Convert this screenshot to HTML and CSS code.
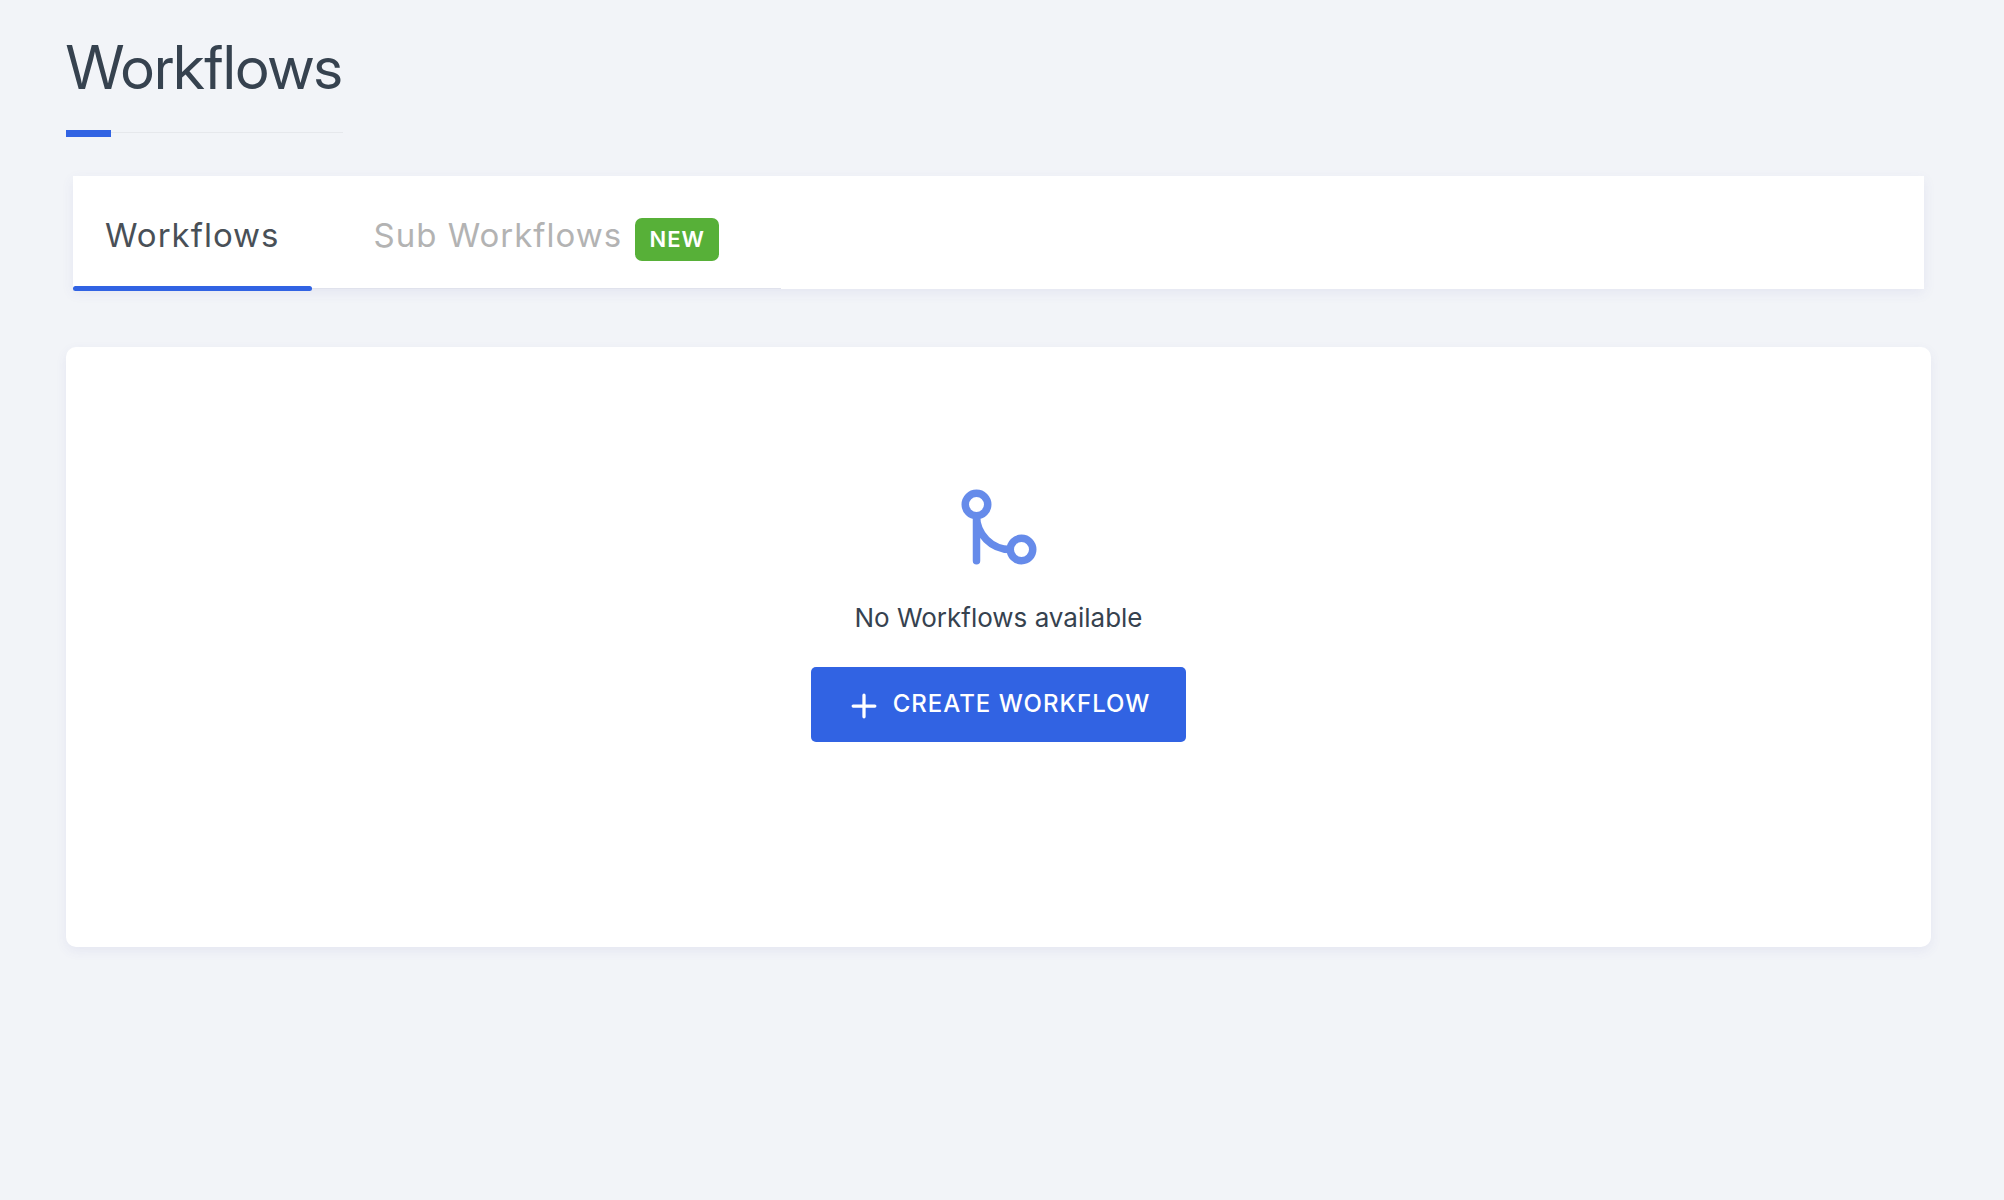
FILE: index.html
```html
<!DOCTYPE html>
<html lang="en">
<head>
<meta charset="utf-8">
<meta name="viewport" content="width=device-width, initial-scale=1">
<title>Workflows</title>
<link rel="stylesheet" href="styles.css">
</head>
<body>
<main class="page">
  <header class="page-header">
    <h1 class="page-title">Workflows</h1>
  </header>
  <nav class="tabs" aria-label="Workflow types">
    <a class="tab tab-active" href="#workflows" aria-current="page">Workflows</a>
    <a class="tab" href="#sub-workflows">Sub Workflows <span class="badge">NEW</span></a>
  </nav>
  <section class="card">
    <svg class="card-icon" viewBox="0 0 24 24" aria-hidden="true">
      <circle cx="18" cy="18" r="3"/>
      <circle cx="6" cy="6" r="3"/>
      <path d="M6 21V9a9 9 0 0 0 9 9"/>
    </svg>
    <p class="card-message">No Workflows available</p>
    <button class="create-button" type="button">
      <svg class="plus-icon" viewBox="0 0 24 24" aria-hidden="true"><path d="M12 2v20M2 12h20"/></svg>
      CREATE WORKFLOW
    </button>
  </section>
</main>
</body>
</html>
```
FILE: styles.css
```css
* {
  box-sizing: border-box;
}

body {
  margin: 0;
  background: #f2f4f8;
  color: #36424f;
  font-family: Inter, "Liberation Sans", sans-serif;
}

.page {
  padding: 31px 73px 32px 66px;
}

.page-header {
  width: fit-content;
  padding-bottom: 28px;
  border-bottom: 1px solid #e6e8ec;
}

.page-header::after {
  content: "";
  position: absolute;
  width: 45px;
  height: 7px;
  margin-top: 26px;
  background: #3163e3;
}

.page-title {
  margin: 0;
  font-family: "Inter Display", Inter, "Liberation Sans", sans-serif;
  font-size: 61px;
  line-height: 73px;
  font-weight: 400;
}

.tabs {
  display: flex;
  align-items: flex-start;
  height: 113px;
  margin: 43px 7px 58px;
  background: #fff;
  box-shadow: 0 4px 12px rgba(80, 80, 160, 0.08);
}

.tab {
  height: 113px;
  padding: 39px 62px 0;
  border-bottom: 1px solid #e0e2ec;
  color: #b3b3b3;
  font-size: 33px;
  line-height: 40px;
  letter-spacing: 1px;
  text-decoration: none;
  white-space: nowrap;
}

.tab-active {
  height: 115px;
  padding: 39px 32px 0;
  border-bottom: 0;
  color: #495057;
}

.tab-active::after {
  content: "";
  display: block;
  height: 5px;
  margin: 31px -32px 0;
  border-radius: 3px;
  background: #3163e3;
}

.badge {
  display: inline-block;
  margin-left: 3px;
  padding: 0 14px;
  border-radius: 7px;
  background: #57b038;
  color: #fff;
  font-size: 22px;
  line-height: 43px;
  font-weight: 600;
}

.card {
  display: flex;
  flex-direction: column;
  align-items: center;
  min-height: 600px;
  padding: 135px 32px 32px;
  border-radius: 10px;
  background: #fff;
  box-shadow: 0 4px 12px rgba(80, 80, 160, 0.08);
}

.card-icon {
  width: 90px;
  height: 90px;
  fill: none;
  stroke: #668bea;
  stroke-width: 2;
  stroke-linecap: round;
}

.card-message {
  margin: 30px 0 33px;
  font-size: 26px;
  line-height: 32px;
}

.create-button {
  display: flex;
  align-items: center;
  gap: 16px;
  height: 75px;
  padding: 0 36px 2px 40px;
  border: 0;
  border-radius: 5px;
  background: #3163e3;
  color: #fff;
  font: 500 24px/32px Inter, "Liberation Sans", sans-serif;
  letter-spacing: 1px;
}

.plus-icon {
  width: 26px;
  height: 26px;
  margin-top: 4px;
  fill: none;
  stroke: #fff;
  stroke-width: 3;
  stroke-linecap: round;
}
```
